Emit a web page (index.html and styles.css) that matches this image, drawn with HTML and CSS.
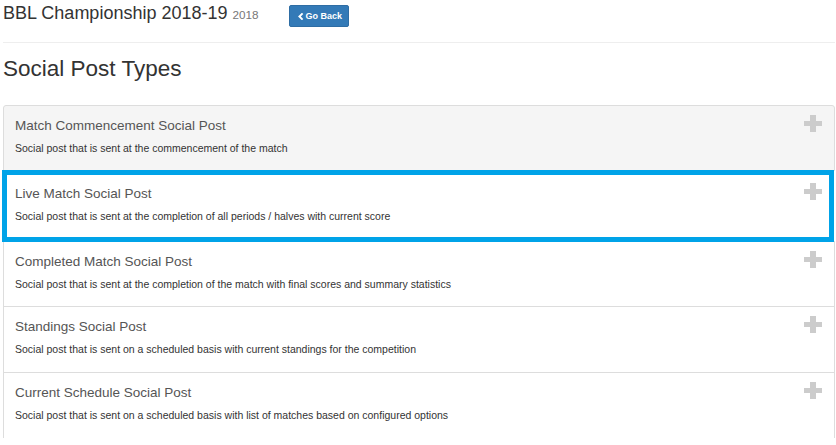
FILE: index.html
```html
<!DOCTYPE html>
<html>
<head>
<meta charset="utf-8">
<link rel="stylesheet" href="styles.css">
</head>
<body>
<div class="page">
  <header class="top">
    <h1 class="comp-title">BBL Championship 2018-19 <small class="year">2018</small></h1>
    <button class="btn-back" type="button"><svg class="chev" viewBox="0 0 6 7" width="6" height="7"><path d="M4.6 0.4 L1.4 3.5 L4.6 6.6" fill="none" stroke="#fff" stroke-width="1.9"/></svg><span>Go Back</span></button>
  </header>
  <h2 class="section-title">Social Post Types</h2>
  <div class="list">
    <div class="item item-hover">
      <div class="item-head"><h4 class="item-title">Match Commencement Social Post</h4><svg class="plus" viewBox="0 0 18 17" width="18" height="17"><rect x="6" y="0" width="6" height="17" fill="#cccccc"/><rect x="0" y="6" width="18" height="5" fill="#cccccc"/></svg></div>
      <p class="item-text">Social post that is sent at the commencement of the match</p>
    </div>
    <div class="item item-selected">
      <div class="item-head"><h4 class="item-title">Live Match Social Post</h4><svg class="plus" viewBox="0 0 18 17" width="18" height="17"><rect x="6" y="0" width="6" height="17" fill="#cccccc"/><rect x="0" y="6" width="18" height="5" fill="#cccccc"/></svg></div>
      <p class="item-text">Social post that is sent at the completion of all periods / halves with current score</p>
    </div>
    <div class="item">
      <div class="item-head"><h4 class="item-title">Completed Match Social Post</h4><svg class="plus" viewBox="0 0 18 17" width="18" height="17"><rect x="6" y="0" width="6" height="17" fill="#cccccc"/><rect x="0" y="6" width="18" height="5" fill="#cccccc"/></svg></div>
      <p class="item-text">Social post that is sent at the completion of the match with final scores and summary statistics</p>
    </div>
    <div class="item">
      <div class="item-head"><h4 class="item-title">Standings Social Post</h4><svg class="plus" viewBox="0 0 18 17" width="18" height="17"><rect x="6" y="0" width="6" height="17" fill="#cccccc"/><rect x="0" y="6" width="18" height="5" fill="#cccccc"/></svg></div>
      <p class="item-text">Social post that is sent on a scheduled basis with current standings for the competition</p>
    </div>
    <div class="item">
      <div class="item-head"><h4 class="item-title">Current Schedule Social Post</h4><svg class="plus" viewBox="0 0 18 17" width="18" height="17"><rect x="6" y="0" width="6" height="17" fill="#cccccc"/><rect x="0" y="6" width="18" height="5" fill="#cccccc"/></svg></div>
      <p class="item-text">Social post that is sent on a scheduled basis with list of matches based on configured options</p>
    </div>
  </div>
</div>
</body>
</html>
```
FILE: styles.css
```css
* { box-sizing: border-box; }
html, body { margin: 0; padding: 0; background: #fff; }
body {
  font-family: "Liberation Sans", Arial, Helvetica, sans-serif;
  color: #333;
}
.page {
  padding: 0 1px 0 3px;
}
.top {
  display: flex;
  align-items: flex-start;
  height: 43px;
  border-bottom: 1px solid #eee;
}
.comp-title {
  margin: 4px 0 0 0;
  font-size: 18px;
  line-height: 19.8px;
  font-weight: 400;
  color: #333;
  white-space: nowrap;
}
.year {
  font-size: 11.7px;
  color: #777;
  font-weight: 400;
}
.btn-back {
  margin: 5px 0 0 30px;
  height: 22px;
  padding: 0 6px 0 8px;
  display: flex;
  align-items: center;
  gap: 2px;
  white-space: nowrap;
  background: #337ab7;
  border: 1px solid #2e6da4;
  border-radius: 2px;
  color: #fff;
  font-family: "Liberation Sans", Arial, sans-serif;
  font-weight: 700;
  font-size: 9px;
  line-height: 13px;
}
.chev { flex: none; }
.section-title {
  margin: 14px 0 23px 0;
  font-size: 22.5px;
  line-height: 24.75px;
  font-weight: 400;
  color: #333;
}
.list {
  display: flex;
  flex-direction: column;
}
.item {
  position: relative;
  border: 1px solid #ddd;
  margin-bottom: -1px;
  padding: 13px 12px 14.8px 11px;
  background: #fff;
}
.item:first-child {
  border-top-left-radius: 3px;
  border-top-right-radius: 3px;
}
.item-hover { background: #f5f5f5; }
.item-selected {
  z-index: 2;
  border: 5px solid #00a3e8;
  margin: 0 1px -1px -1px;
  padding: 11.5px 7px 12.8px 8px;
}
.item-head {
  display: flex;
  justify-content: space-between;
  align-items: flex-start;
}
.item-title {
  margin: 0 0 7.1px 0;
  font-size: 13.5px;
  line-height: 14.85px;
  font-weight: 400;
  color: #555;
}
.plus {
  flex: none;
  margin-top: -4px;
}
.item-text {
  margin: 0;
  font-size: 10.5px;
  line-height: 15px;
  color: #333;
}
```
